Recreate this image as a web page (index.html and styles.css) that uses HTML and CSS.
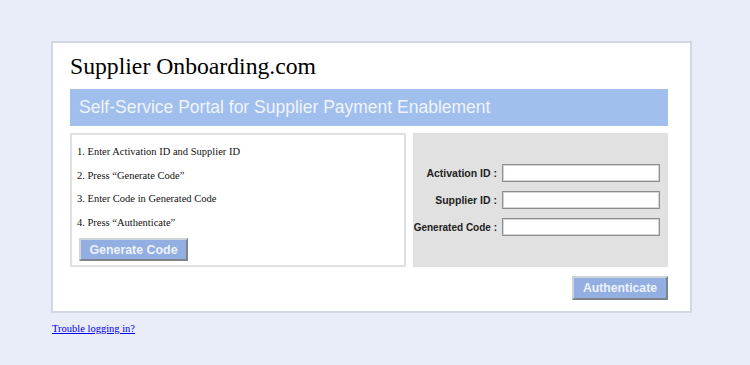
FILE: index.html
```html
<!DOCTYPE html>
<html lang="en">
<head>
<meta charset="utf-8">
<title>Supplier Onboarding.com</title>
<link rel="stylesheet" href="styles.css">
</head>
<body>
<div class="page">
  <div class="card">
    <h1 class="title">Supplier Onboarding.com</h1>
    <div class="banner">Self-Service Portal for Supplier Payment Enablement</div>
    <div class="panels">
      <div class="steps">
        <p>1. Enter Activation ID and Supplier ID</p>
        <p>2. Press “Generate Code”</p>
        <p>3. Enter Code in Generated Code</p>
        <p>4. Press “Authenticate”</p>
        <button class="btn btn-generate" type="button">Generate Code</button>
      </div>
      <div class="formbox">
        <div class="form">
          <label class="lbl" for="act">Activation ID :</label>
          <input class="field" id="act" type="text">
          <label class="lbl" for="sup">Supplier ID :</label>
          <input class="field" id="sup" type="text">
          <label class="lbl lbl-small" for="gen">Generated Code :</label>
          <input class="field" id="gen" type="text">
        </div>
      </div>
    </div>
    <div class="actions">
      <button class="btn btn-auth" type="button">Authenticate</button>
    </div>
  </div>
  <a class="trouble" href="#">Trouble logging in?</a>
</div>
</body>
</html>
```
FILE: styles.css
```css
html, body {
  margin: 0;
  padding: 0;
  background: #e9ecf9;
}
.page {
  padding: 41px 0 0 51px;
  font-family: "Liberation Serif", "Times New Roman", serif;
}
.card {
  width: 598px;
  background: #ffffff;
  border: 2px solid #d2d7e5;
  padding: 9px 22px 11px 17px;
}
.title {
  margin: 0 0 9px 0;
  font-family: "Liberation Serif", "Times New Roman", serif;
  font-weight: normal;
  font-size: 23.7px;
  line-height: 28px;
  color: #000;
}
.banner {
  height: 37px;
  line-height: 37px;
  background: #a1bfec;
  color: #f0f4fd;
  font-family: "Liberation Sans", Arial, sans-serif;
  font-size: 17.5px;
  padding-left: 9px;
  white-space: nowrap;
}
.panels {
  display: flex;
  gap: 7px;
  margin-top: 7px;
}
.steps {
  width: 323px;
  border: 2px solid #e0e0e0;
  padding: 10px 4px 4px 5px;
  font-size: 10.5px;
  line-height: 13px;
  color: #111;
}
.steps p {
  margin: 0 0 10.5px 0;
}
.steps p:nth-of-type(4) {
  margin-bottom: 9.5px;
}
.btn {
  display: block;
  font-family: "Liberation Sans", Arial, sans-serif;
  font-weight: bold;
  color: #eef2fb;
  background: #93aee0;
  border: 2px solid;
  border-color: #cfd3da #7f8288 #7f8288 #cfd3da;
  padding: 0;
  margin: 0;
}
.btn-generate {
  margin-left: 2px;
  width: 109px;
  height: 23px;
  font-size: 12.4px;
}
.formbox {
  flex: 1;
  background: #e0e1e0;
  display: flex;
  align-items: center;
  justify-content: flex-end;
  padding-right: 8px;
}
.form {
  display: grid;
  grid-template-columns: auto 158px;
  column-gap: 5px;
  row-gap: 9px;
  align-items: center;
}
.lbl {
  text-align: right;
  font-family: "Liberation Sans", Arial, sans-serif;
  font-weight: bold;
  font-size: 10.5px;
  color: #222;
  white-space: nowrap;
}
.lbl-small {
  font-size: 10px;
}
.field {
  box-sizing: border-box;
  width: 158px;
  height: 18px;
  margin: 0;
  padding: 0 2px;
  background: #fff;
  border: 1px solid #8d8d8d;
  box-shadow: inset 0 0 0 1px #d6d6d6;
}
.actions {
  display: flex;
  justify-content: flex-end;
  margin-top: 9px;
}
.btn-auth {
  width: 96px;
  height: 24px;
  font-size: 12.25px;
}
.trouble {
  display: inline-block;
  margin: 10px 0 0 1px;
  font-size: 10.5px;
  line-height: 12px;
  color: #0000ee;
}
```
